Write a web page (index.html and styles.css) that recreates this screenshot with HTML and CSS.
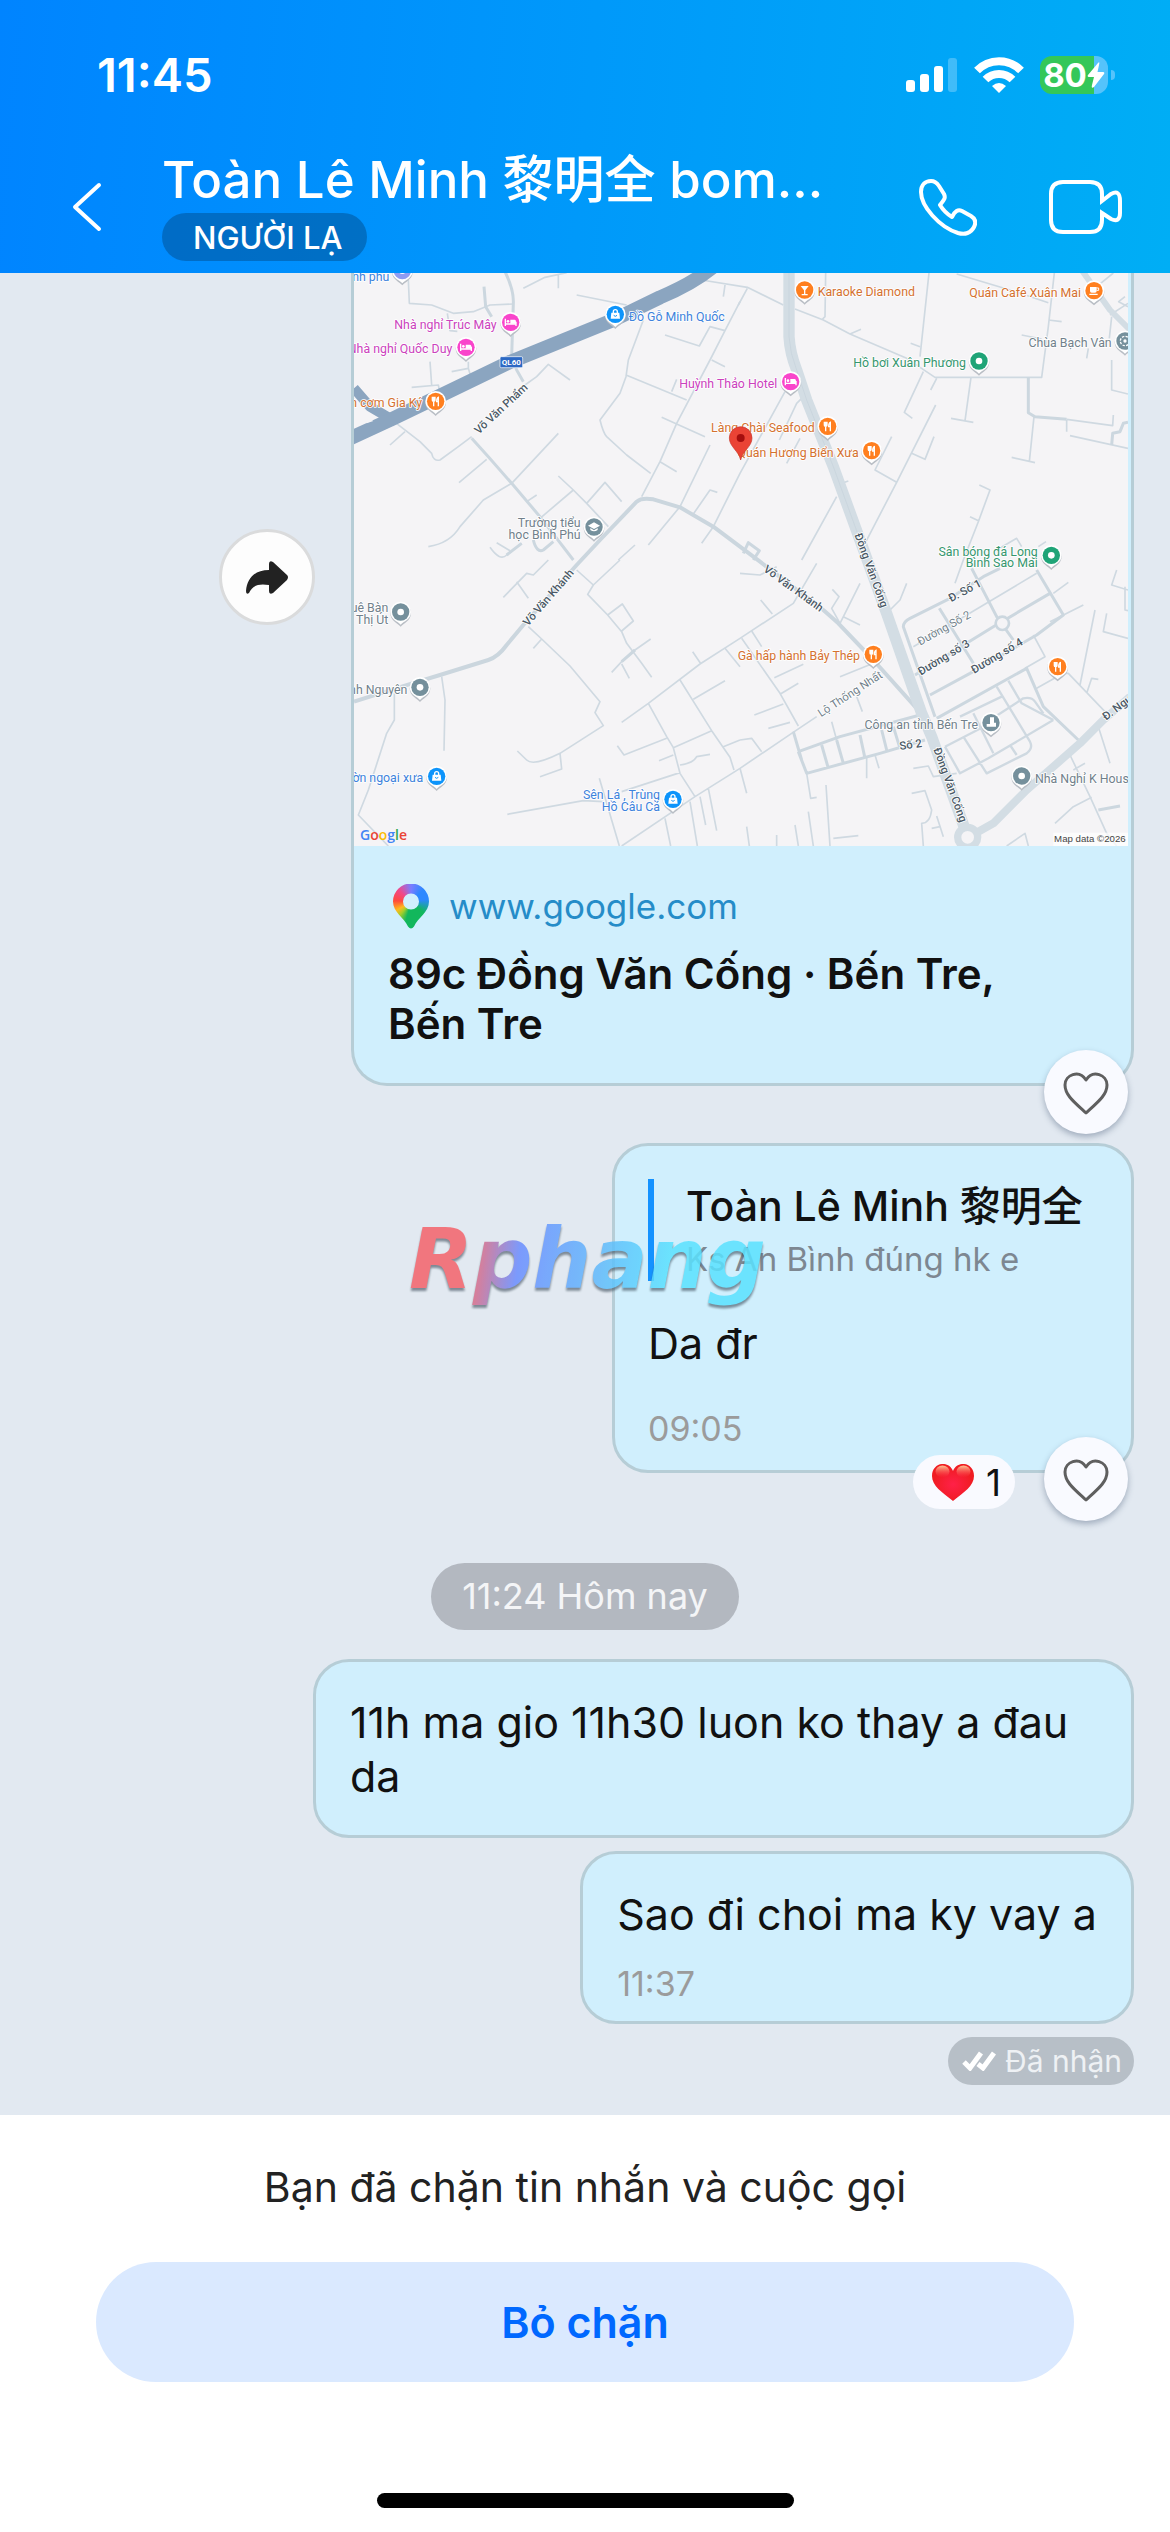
FILE: index.html
```html
<!DOCTYPE html>
<html lang="vi">
<head>
<meta charset="utf-8">
<meta name="viewport" content="width=device-width, initial-scale=1">
<title>Toàn Lê Minh 黎明全</title>
<link rel="stylesheet" href="styles.css">
</head>
<body>
<header class="topbar">
  <div class="status">
    <time class="status-time">11:45</time>
    <div class="status-icons">
      <svg width="52" height="36" viewBox="0 0 52 36" fill="#fff" aria-hidden="true"><rect y="23" width="9" height="12" rx="3"/><rect x="14" y="17" width="9" height="18" rx="3"/><rect x="28" y="9" width="9" height="26" rx="3"/><rect x="42" y="1" width="9" height="34" rx="3" opacity=".25"/></svg>
      <svg width="50" height="38" viewBox="0 0 50 38" fill="none" stroke="#fff" stroke-width="8" aria-hidden="true"><path d="M3 14.500C15 2 35 2 47 14.500"/><path d="M11.500 23.500C19 16 31 16 38.500 23.500"/><path d="M25 37L18 30Q25 24 32 30Z" fill="#fff" stroke="none"/></svg>
      <div class="battery"><span>80</span><svg width="18" height="26" viewBox="0 0 18 26" fill="#fff" aria-hidden="true"><path d="M11 1Q13-1 12 3L10.500 10H16Q18 10 17 12L7 25Q4 27 5 23L7 15H2Q0 15 1 13Z"/></svg></div>
    </div>
  </div>
  <nav class="nav">
    <button class="icon-btn back" aria-label="Quay lại"><svg width="32" height="50" viewBox="0 0 32 50" fill="none" stroke="#fff" stroke-width="4" stroke-linecap="round" stroke-linejoin="round"><path d="M28 3L4 25L28 47"/></svg></button>
    <div class="who">
      <h1>Toàn Lê Minh 黎明全 bom...</h1>
      <span class="tag">NGƯỜI LẠ</span>
    </div>
    <button class="icon-btn" aria-label="Gọi thoại"><svg width="58" height="57" viewBox="0 0 58 57" fill="none" stroke="#fff" stroke-width="4" stroke-linejoin="round"><path d="M12 2C16 2 18 4 20 7L25 15C27 19 25 21 21 26C24 31 28 35 33 38C36 32 39 30 43 32L52 37C57 40 57 44 55 48C52 54 46 56 39 54C20 48 2 27 2 13C2 6 6 2 12 2Z"/></svg></button>
    <button class="icon-btn" aria-label="Gọi video"><svg width="74" height="54" viewBox="0 0 74 54" fill="none" stroke="#fff" stroke-width="4"><path d="M53 21V14Q53 2 41 2H14Q2 2 2 14V40Q2 52 14 52H41Q53 52 53 40V33L62 39Q71 43 71 33V21Q71 9 62 14Z"/></svg></button>
  </nav>
</header>

<main class="chat">
  <div class="row">
    <button class="share" aria-label="Chuyển tiếp"><svg width="42" height="33" viewBox="0 0 42 33" fill="#222"><path d="M23 3Q23-1 27 1L41 14Q43 16 41 19L27 32Q23 34 23 30V24C12 22 6 25 3 32Q0 34 0 30C1 18 8 9 23 9Z"/></svg></button>
    <article class="bubble link-card">
      <svg class="map" viewBox="42 39 2322 1719" role="img" aria-label="Bản đồ Bến Tre">
        <defs>
          <g id="pin"><path d="M0 41C-8 31-31 24-31 0A31 31 0 1 1 31 0C31 24 8 31 0 41Z" fill="#b9bec5" transform="translate(0 3)"/><path d="M0 38C-8 28-31 23-31 0A31 31 0 1 1 31 0C31 23 8 28 0 38Z" fill="#fff"/><circle r="26" fill="currentColor"/></g>
          <g id="dot"><use href="#pin"/><circle r="10" fill="#fff"/></g>
          <g id="bed"><use href="#pin"/><path d="M-16-11V11M-16 5H16M16 11V-2" stroke="#fff" stroke-width="4" fill="none"/><circle cx="-8" cy="-3" r="4" fill="#fff"/><path d="M-1-8H12Q16-8 16-2V4H-1Z" fill="#fff"/></g>
          <g id="food"><use href="#pin"/><path d="M-10-14V-3Q-10 0-6 0Q-2 0-2-3V-14M-6-14V15M8 15V-12Q3-10 3 1H8" stroke="#fff" stroke-width="4" fill="none"/></g>
          <g id="bag"><use href="#pin"/><path d="M-12-5H12L14 13H-14Z" fill="#fff"/><path d="M-6-4V-8A6 6 0 0 1 6-8V-4" stroke="#fff" stroke-width="4" fill="none"/><path d="M-5 3Q0 9 5 3" stroke="currentColor" stroke-width="3" fill="none"/></g>
          <g id="cup"><use href="#pin"/><path d="M-12-11H8V1Q8 6 3 6H-7Q-12 6-12 1ZM-14 9H11V13H-14Z" fill="#fff"/><path d="M8-8H14V-1H8" stroke="#fff" stroke-width="3" fill="none"/></g>
          <g id="school"><use href="#pin"/><path d="M0-14L18-4L0 6L-18-4ZM-11 3V9Q0 17 11 9V3L0 10Z" fill="#fff"/></g>
        </defs>
        <rect x="42" y="39" width="2322" height="1719" fill="#f5f4f6"/>
        <g fill="none" stroke-linejoin="round">
          <path class="lane" d="M205 60L208 130L275 135L340 160L400 155L450 135L520 132M322 160L330 212L352 214M270 305L275 375M215 382L295 375L300 400M335 335L385 325L392 348M385 305V325M550 85L615 52L680 38M655 45V85M710 105L860 135M555 375L590 350L625 313L690 360M150 475L240 545L275 580Q280 605 300 600L355 560L395 530M150 555L195 515M655 520L515 670L430 720L360 800Q330 850 265 860M357 668L440 598M560 725L590 705M910 180L865 300L858 350L840 400L780 480Q790 520 800 530L860 585L932 640M858 345L1040 420M995 395L1010 358M975 225L1078 258L1110 200L1155 212M1200 125L1155 212L1110 300L1010 490L960 605L905 710M1115 300L1155 320M965 472L1095 530M960 605L1010 635M1110 555L1020 740L925 855M1060 762L1110 690L1132 697M1335 395L1200 640L1120 800L1085 850M1085 60L1222 82L1330 135M1155 75L1150 110M655 648L700 690L740 730L805 800M740 730L795 667L845 725M700 690L600 775M835 900L885 855M450 862Q480 905 500 885L545 850M470 848L510 872"/>
          <path class="lane" d="M625 900L580 945L560 940L490 1012M530 965L565 1015M710 930L760 975L840 900M760 975L743 1003L803 1065L845 1115L860 1150L905 1210L935 1252M803 1065L847 1032L880 1083L845 1113M932 1137L885 1170L845 1205L815 1237M845 1212L868 1255M565 1100L605 1137L690 1218L780 1325L765 1358L790 1397L660 1480Q580 1520 560 1500L532 1473M660 1480L665 1527L600 1550M605 1137L580 1165M845 1387L925 1330L1080 1212L1200 1135L1360 1030L1430 910M1058 1175L1083 1212M925 1330L980 1430L1000 1463L1020 1540L1065 1610M1020 1260L1115 1412L1170 1492L1182 1530M1060 1318L1155 1262M1000 1463L1115 1412M832 1457L852 1485L980 1435M957 1502L1000 1485M1020 1515Q1060 1510 1070 1490L1110 1483M1150 1460L1200 1440M845 1758L1065 1610L1200 1525L1355 1420L1430 1370M845 1595L1020 1538M502 1663L730 1622L790 1625M778 1555L838 1758M975 1675L992 1758M1050 1625L1072 1758M1080 1610L1097 1695M1105 1585L1130 1712M1155 1165L1200 1220M305 1250L315 1320L312 1472M163 1300V1380L140 1420L85 1590L55 1665L145 1758"/>
          <path class="lane" d="M1222 85L1195 135M1365 147L1450 180L1530 222L1700 295L1785 352L1905 352H2105L2125 200L2143 39M1457 39L1455 170L1445 180M1530 222L1563 208M1767 39L1740 290M1712 250L1740 260M1850 42L2010 90L2125 128M2045 225L2105 237M2125 180L2165 185M1750 335L1693 457L1717 475M1790 355L1772 390M1893 352L1875 482M1833 475L1900 487M2180 478L2318 497L2320 465M2180 480V515M2082 470L2068 605M2015 592L2085 608M2190 527L2364 565M1655 530L1605 630L1670 667M1787 435L1670 667L1575 850M1715 580L1755 598L1782 530M1318 540L1370 430L1385 415M1340 610L1380 535M1490 710L1385 900M1505 670L1525 663M1918 675L1950 690L1915 785L1870 900L1845 970M1890 770L1917 783M1970 870L2030 835L2045 860M2095 860L2118 845M2315 170L2308 235M2364 130L2310 165M2364 140L2336 125L2355 110M2315 300V390L2364 402M2245 265L2240 295M2270 80L2320 39"/>
          <path class="lane" d="M1262 1020L1297 1062M1235 1113L1265 1160M1205 1135L1320 1300L1375 1398M1320 1303L1375 1270M1243 1365L1330 1332M1285 1405L1350 1387M1500 1090L1560 970M1510 1070L1560 1095M1500 1090L1475 1045L1497 1010L1477 988M1650 1050L1680 1020L1700 970M1303 1253L1390 1213M1200 940L1260 945L1310 920M1500 1250L1600 1210M1720 1160L2090 940M2080 1125L2115 1190L2055 1225M2090 1285L2170 1240L2185 1240L2295 1355M2220 1275L2265 1050M2130 1085L2230 1035M2300 1060L2290 1115L2364 1135M2330 930L2315 975L2364 990M2355 980V1050L2364 1052M2240 1300L2255 1255L2275 1258M2140 1000L2185 967M1475 1385L1490 1440M1550 1310L1567 1355M1400 1540L1412 1615L1430 1612M1458 1575L1470 1758M1480 1735L1555 1727M1405 1655L1420 1758M1365 1695L1375 1758M1220 1700L1228 1758M1310 1725V1758M1580 1490V1555M1605 1485L1617 1525M1715 1600L1755 1592L1775 1650Q1770 1690 1745 1690L1750 1758M1790 1668L1810 1730M1775 1705L1800 1700M1720 1525L1765 1518L1780 1550L1850 1540M2190 1485L2250 1610L2300 1720L2330 1758M2275 1400L2310 1510M2145 1690L2200 1640L2255 1612M2200 1530L2235 1510M1200 1440L1235 1435L1265 1475M1200 1525L1220 1600M2000 1758L2055 1720L2065 1758"/>
          <path class="street" d="M432 80L437 140L455 170M495 35Q522 90 520 130L515 290L530 330L550 365M395 535L445 590L515 670L600 770L700 900M580 840Q590 880 610 870L640 845M500 885L545 850M1210 880L1225 848L1258 872L1240 900M845 1205L885 1170M2065 352V458L2085 470L2180 478M2315 555L2318 520L2340 515L2350 490L2364 487M2275 1650L2340 1638"/>
          <path class="street" d="M1785 1370L1690 1100Q1690 1085 1710 1075L1830 1015L1930 950L1980 925M1770 1305L1890 1240L2090 1125L2170 1065L2090 930M1725 1245L1960 1100L2130 1000M1790 1375L2060 1225L2110 1340L2215 1440M1798 1045L1900 1210M1895 925L1970 1070L2020 1140"/>
          <path class="street" d="M1375 1475L1500 1430L1740 1365M1375 1475L1400 1540L1620 1480L1755 1440M1445 1455L1465 1525M1490 1440L1510 1510M1560 1425L1575 1495M1625 1410L1640 1470M1660 1400L1680 1465M1360 1415L1385 1500"/>
          <path class="lane wide" d="M1815 1460L1960 1385M1815 1460L1860 1540L1945 1495L2140 1380M1870 1430L1940 1540L2060 1480Q2080 1465 2070 1445L1970 1280M2005 1262L2045 1330L2140 1380M1860 1370L1985 1310M1950 1380L2050 1315Q2075 1310 2085 1325L2110 1360M2010 1455L2030 1485M1900 1360L1960 1480"/>
          <path class="road" d="M42 1325L185 1280L300 1245L445 1200Q475 1190 500 1155L550 1095L710 915L780 840L890 725Q905 712 940 718L1020 742L1120 800L1200 860L1260 905L1450 1050L1495 1090L1600 1200L1730 1345"/>
          <path d="M2225 30L2310 150L2370 210" stroke="#d3dde4" stroke-width="18"/>
          <path d="M1880 1735L1960 1690L2060 1590L2220 1450L2290 1380L2370 1310" stroke="#d3dde4" stroke-width="24"/>
          <path d="M1347 30V230Q1350 280 1370 330L1400 420L1480 620L1560 840L1640 1060L1745 1360L1775 1430L1883 1730" stroke="#d3dde4" stroke-width="34"/>
          <path d="M1347 30V230Q1350 280 1370 330L1400 420L1480 620L1560 840" stroke="#c6d2db" stroke-width="2"/>
          <path d="M42 385L90 440L150 475" stroke="#8ba5c0" stroke-width="30"/>
          <path d="M30 535L150 480L290 412L512 305L820 180L960 112Q1060 70 1120 20" stroke="#8ba5c0" stroke-width="42"/>
          <path d="M78 470L100 483L80 490Z" fill="#f5f4f6"/>
          <circle cx="1883" cy="1732" r="30" stroke="#d3dde4" stroke-width="22" fill="#f5f4f6"/>
          <circle cx="1987" cy="1090" r="20" stroke="#ccd7df" stroke-width="8" fill="#f5f4f6"/>
        </g>
        <rect x="480" y="290" width="68" height="33" rx="4" fill="#2d69c4" stroke="#fff" stroke-width="2"/>
        <g class="labels">
          <text x="514" y="316" class="shield">QL60</text>
          <g class="blue"><text x="148" y="62" class="end">Bình phú</text><text x="866" y="183">Đồ Gỗ Minh Quốc</text><text x="250" y="1567" class="end">vườn ngoại xưa</text><text x="960" y="1618" class="end">Sên Lá , Trùng</text><text x="960" y="1652" class="end">Hồ Câu Cá</text></g>
          <g class="pink end"><text x="470" y="206">Nhà nghỉ Trúc Mây</text><text x="337" y="280">Nhà nghỉ Quốc Duy</text><text x="1312" y="383">Huỳnh Thảo Hotel</text></g>
          <g class="orange"><text x="246" y="441" class="end">Quán cơm Gia Ký</text><text x="1424" y="517" class="end">Làng Chài Seafood</text><text x="1556" y="590" class="end">Quán Hương Biển Xưa</text><text x="1433" y="107">Karaoke Diamond</text><text x="2223" y="110" class="end">Quán Café Xuân Mai</text><text x="1560" y="1201" class="end">Gà hấp hành Bảy Thép</text></g>
          <g class="green end"><text x="1878" y="321">Hồ bơi Xuân Phương</text><text x="2093" y="887">Sân bóng đá Long</text><text x="2093" y="921">Bình Sao Mai</text></g>
          <g class="gray"><text x="722" y="801" class="end">Trường tiểu</text><text x="722" y="837" class="end">học Bình Phú</text><text x="2315" y="261" class="end">Chùa Bạch Vân</text><text x="1914" y="1406" class="end">Công an tỉnh Bến Tre</text><text x="2085" y="1568">Nhà Nghỉ K House</text><text x="145" y="1056" class="end">Quê Bàn</text><text x="145" y="1092" class="end">Thị Út</text><text x="202" y="1302" class="end">Thanh Nguyên</text>
            <text transform="translate(1443 1372) rotate(-33)" class="small">Lộ Thống Nhất</text><text transform="translate(1740 1157) rotate(-29)" class="small">Đường Số 2</text></g>
          <g class="dark"><text transform="translate(416 524) rotate(-43)">Võ Văn Phẩm</text><text transform="translate(564 1100) rotate(-49)">Võ Văn Khánh</text><text transform="translate(1268 932) rotate(36)">Võ Văn Khánh</text><text transform="translate(1543 824) rotate(70)">Đồng Văn Cống</text><text transform="translate(1780 1468) rotate(70)">Đồng Văn Cống</text><text transform="translate(1833 1027) rotate(-28)">Đ. Số 1</text><text transform="translate(1742 1247) rotate(-31)">Đường số 3</text><text transform="translate(1902 1242) rotate(-31)">Đường số 4</text><text transform="translate(1680 1470) rotate(-8)">Số 2</text><text transform="translate(2298 1382) rotate(-37)">Đ. Nguyễn</text></g>
        </g>
        <g color="#8f9cf2"><use href="#dot" x="187" y="32"/></g>
        <g color="#f945cb"><use href="#bed" x="512" y="187"/><use href="#bed" x="378" y="262"/><use href="#bed" x="1352" y="365"/></g>
        <g color="#0d94fb"><use href="#bag" x="826" y="163"/><use href="#bag" x="290" y="1549"/><use href="#bag" x="999" y="1618"/></g>
        <g color="#ff7f1f"><use href="#food" x="287" y="424"/><use href="#food" x="1463" y="499"/><use href="#food" x="1595" y="572"/><use href="#food" x="1600" y="1183"/><use href="#food" x="2153" y="1220"/><use href="#cup" x="2262" y="92"/><use href="#pin" x="1394" y="90"/><path d="M1382 78H1406L1396 91V102H1403V106H1385V102H1392V91Z" fill="#fff"/></g>
        <g color="#1fa477"><use href="#dot" x="1917" y="303"/><use href="#dot" x="2134" y="886"/></g>
        <g color="#75909c"><use href="#school" x="762" y="801"/><use href="#dot" x="182" y="1056"/><use href="#dot" x="240" y="1282"/><use href="#dot" x="2045" y="1548"/><use href="#pin" x="2355" y="243"/><circle cx="2355" cy="243" r="14" fill="none" stroke="#fff" stroke-width="4" stroke-dasharray="7 4"/><circle cx="2355" cy="243" r="5" fill="#fff"/><use href="#pin" x="1953" y="1388"/><path d="M1950 1372H1962V1388H1968V1400H1940V1392H1950Z" fill="#fff"/></g>
        <path d="M1202 600C1196 572 1168 560 1168 534A34 34 0 0 1 1236 534C1236 560 1208 572 1202 600Z" fill="#ea4335" stroke="#c5372b" stroke-width="2"/><circle cx="1202" cy="534" r="12" fill="#a50e0e"/>
        <text x="60" y="1740" class="google"><tspan fill="#4285f4">G</tspan><tspan fill="#ea4335">o</tspan><tspan fill="#fbbc05">o</tspan><tspan fill="#4285f4">g</tspan><tspan fill="#34a853">l</tspan><tspan fill="#ea4335">e</tspan></text>
        <rect x="2140" y="1718" width="224" height="40" fill="#fff" opacity=".7"/>
        <text x="2357" y="1747" class="credit end">Map data ©2026</text>
      </svg>
      <div class="link-body">
        <a class="site" href="#map"><span class="maps-icon"></span>www.google.com</a>
        <h2>89c Đồng Văn Cống · Bến Tre, Bến Tre</h2>
      </div>
      <div class="reactions">
        <button class="heart" aria-label="Thả tim"><svg width="46" height="43" viewBox="0 0 46 43" fill="none" stroke="#5f5f5f" stroke-width="3" stroke-linejoin="round"><path d="M23 41C11 30 2 23 2 13C2 3 16-3 23 8C30-3 44 3 44 13C44 23 35 30 23 41Z"/></svg></button>
      </div>
    </article>
  </div>

  <article class="bubble reply">
    <blockquote class="quote">
      <strong>Toàn Lê Minh 黎明全</strong>
      <span>Ks An Bình đúng hk e</span>
    </blockquote>
    <p class="reply-text">Da đr</p>
    <time class="stamp">09:05</time>
    <div class="reactions">
      <span class="count"><svg width="42" height="37" viewBox="0 0 42 37" aria-hidden="true"><defs><radialGradient id="red" cx=".5" cy=".55" r=".6"><stop offset="0" stop-color="#ff2148"/><stop offset=".8" stop-color="#f01c22"/></radialGradient><linearGradient id="shine" x2="0" y2="1"><stop stop-color="#ffd9a0" stop-opacity=".9"/><stop offset="1" stop-color="#ff4a5a" stop-opacity="0"/></linearGradient></defs><path d="M21 37C10 28 0 22 0 12C0-2 17-4 21 7C25-4 42-2 42 12C42 22 32 28 21 37Z" fill="url(#red)"/><ellipse cx="10.500" cy="7.500" rx="7" ry="6" fill="url(#shine)"/><ellipse cx="31.500" cy="7.500" rx="7" ry="6" fill="url(#shine)"/></svg>1</span>
      <button class="heart" aria-label="Thả tim"><svg width="46" height="43" viewBox="0 0 46 43" fill="none" stroke="#5f5f5f" stroke-width="3" stroke-linejoin="round"><path d="M23 41C11 30 2 23 2 13C2 3 16-3 23 8C30-3 44 3 44 13C44 23 35 30 23 41Z"/></svg></button>
    </div>
    <span class="watermark">Rphang</span>
  </article>

  <time class="date">11:24 Hôm nay</time>

  <article class="bubble text-bubble"><p>11h ma gio 11h30 luon ko thay a đau da</p></article>
  <article class="bubble text-bubble last"><p>Sao đi choi ma ky vay a</p><time class="stamp">11:37</time></article>
  <span class="delivered"><svg width="34" height="20" viewBox="0 0 34 20" fill="none" stroke="#fff" stroke-width="5" aria-hidden="true"><path d="M2 11L8 17L19 2"/><path d="M16 13L21 17L32 2"/></svg>Đã nhận</span>
</main>

<footer class="blocked">
  <p>Bạn đã chặn tin nhắn và cuộc gọi</p>
  <button class="unblock">Bỏ chặn</button>
  <div class="home"></div>
</footer>
</body>
</html>
```

FILE: styles.css
```css
* { box-sizing: border-box; }
body {
  margin: 0;
  min-height: 100vh;
  display: flex;
  flex-direction: column;
  background: #fff;
  color: #111;
  font-family: Inter, "Noto Sans CJK SC", sans-serif;
}
h1, h2, p, blockquote { margin: 0; }
button { border: 0; padding: 0; font: inherit; background: none; cursor: pointer; }
svg { display: block; flex: none; }

/* header */
.topbar { background: linear-gradient(95deg, #0084ff, #00aef5); color: #fff; }
.status { display: flex; justify-content: space-between; align-items: center; height: 149px; padding: 0 55px 0 97px; }
.status-time { font-size: 47px; font-weight: 600; line-height: 54px; }
.status-icons { display: flex; align-items: center; gap: 16px; }
.battery {
  position: relative;
  display: flex;
  align-items: center;
  justify-content: center;
  width: 68px;
  height: 38px;
  margin-right: 7px;
  border-radius: 12px;
  background: linear-gradient(90deg, #34c759 54px, #55c3fb 54px);
  font-size: 33px;
  font-weight: 700;
  line-height: 38px;
}
.battery::after {
  content: "";
  position: absolute;
  right: -7px;
  top: 14px;
  width: 4px;
  height: 10px;
  border-radius: 0 5px 5px 0;
  background: #55c3fb;
}
.nav { display: flex; align-items: center; height: 124px; padding: 0 47px 8px 71px; gap: 72px; }
.nav .back { margin-right: -13px; }
.who { flex: 1; min-width: 0; align-self: flex-start; display: flex; flex-direction: column; align-items: flex-start; gap: 2px; }
h1 { font-size: 51px; font-weight: 500; line-height: 62px; white-space: nowrap; }
.tag { padding: 2px 24px 0 31px; border-radius: 24px; background: rgba(0, 70, 130, .45); font-size: 31px; font-weight: 500; line-height: 46px; }

/* conversation */
.chat { flex: 1; display: flex; flex-direction: column; align-items: flex-end; padding: 0 36px 30px; background: #e2e9f1; }
.bubble { position: relative; max-width: 821px; border: 3px solid #b6cdd6; border-radius: 36px; background: #d0effd; }
.row { display: flex; justify-content: flex-end; align-items: flex-start; gap: 36px; width: 100%; margin-bottom: 57px; }
.share { display: grid; place-items: center; width: 96px; height: 96px; margin-top: 256px; border: 3px solid #dadbdc; border-radius: 50%; background: #fdfdfd; }
.link-card { flex: 0 1 783px; border-top: 0; border-radius: 0 0 36px 36px; }
.map { width: calc(100% - 3px); height: auto; }
.link-body { padding: 37px 34px 34px; }
.site { display: flex; align-items: center; gap: 20px; padding-left: 5px; color: #258cc8; font-size: 35px; line-height: 46px; text-decoration: none; }
.maps-icon {
  width: 36px;
  height: 45px;
  background: conic-gradient(from 0deg at 18px 18px, #7a7cff 0deg, #2c88ff 45deg, #2c88ff 80deg, #12b75c 130deg, #12b75c 195deg, #a6ce2a 220deg, #ffb91f 240deg, #ff4a3d 275deg, #f0488a 315deg, #7a7cff 360deg);
  clip-path: path(evenodd, "M18 0A18 18 0 0 1 36 18C36 29 25 34 21 43Q18 47 15 43C11 34 0 29 0 18A18 18 0 0 1 18 0ZM18 10A8 8 0 0 0 18 26A8 8 0 0 0 18 10Z");
}
h2 { margin-top: 20px; font-size: 42px; font-weight: 600; line-height: 50px; max-width: 640px; }

.reactions { position: absolute; right: 3px; bottom: -51px; display: flex; align-items: center; gap: 29px; }
.heart { display: grid; place-items: center; width: 84px; height: 84px; padding-top: 2px; border-radius: 50%; background: #f9faff; box-shadow: 0 3px 6px rgba(60, 80, 110, .4); }
.count { display: flex; align-items: center; gap: 12px; height: 54px; margin-top: 6px; padding: 0 14px 0 19px; border-radius: 27px; background: #f9faff; font-size: 37px; }

.reply { width: 522px; padding: 33px 33px 21px; }
.quote { display: flex; flex-direction: column; gap: 4px; height: 102px; padding-left: 32px; border-left: 6px solid #1492ff; white-space: nowrap; }
.quote strong { font-size: 41px; font-weight: 500; line-height: 54px; }
.quote span { color: #7d8791; font-size: 33px; line-height: 44px; }
.reply-text { margin: 35px 0 39px; font-size: 43px; line-height: 54px; }
.stamp { display: block; color: #9b9b9b; font-size: 34px; line-height: 40px; }
.watermark {
  position: absolute;
  left: -212px;
  top: 64px;
  padding: 0 6px;
  background: linear-gradient(98deg, #f4636a 19%, #6a8dff 32%, #5fc0fb 56%, #5ae2ff 72%);
  -webkit-background-clip: text;
  background-clip: text;
  color: transparent;
  font: italic 700 83px/100px "DejaVu Sans", sans-serif;
  opacity: .85;
  filter: drop-shadow(0 3px 1px rgba(60, 75, 90, .7));
}

.date { align-self: center; margin: 90px 0 29px; padding: 0 31px; border-radius: 34px; background: #b3b8c0; color: #f4f5f7; font-size: 36px; line-height: 67px; }
.text-bubble { padding: 33px 34px 32px; font-size: 43px; line-height: 54px; }
.last { margin-top: 13px; padding: 33px 34px 17px; }
.last .stamp { margin-top: 23px; }
.delivered { display: flex; align-items: center; gap: 9px; margin-top: 13px; padding: 0 12px 0 14px; border-radius: 24px; background: #b7bfc7; color: #eef1f4; font-size: 30px; line-height: 48px; }

/* blocked notice */
.blocked { display: flex; flex-direction: column; align-items: center; padding: 46px 96px 24px; color: #222; }
.blocked p { font-size: 41px; line-height: 52px; }
.unblock { width: 100%; height: 120px; margin: 49px 0 111px; border-radius: 60px; background: #dae9ff; color: #0068ff; font-size: 43px; font-weight: 600; }
.home { width: 417px; height: 15px; border-radius: 8px; background: #000; }

/* map drawing */
.lane { stroke: #cfd9e1; stroke-width: 5; }
.wide { stroke-width: 7; }
.street { stroke: #ccd7df; stroke-width: 9; }
.road { stroke: #cbd6de; stroke-width: 12; }
.labels text { font-family: Roboto, sans-serif; font-size: 37px; stroke: #fff; stroke-width: 5px; paint-order: stroke; stroke-linejoin: round; }
.labels text.small { font-size: 34px; }
.labels text.shield { fill: #fff; stroke: none; font-size: 24px; font-weight: 700; text-anchor: middle; }
.end { text-anchor: end; }
.blue { fill: #3d82dc; }
.pink { fill: #cb42bd; }
.orange { fill: #d4712f; }
.green { fill: #35966e; }
.gray { fill: #717f8b; }
.dark { fill: #4b5966; }
.labels .dark text { font-size: 34px; font-weight: 500; }
.google { font-family: "Open Sans", sans-serif; font-size: 42px; font-weight: 600; }
.credit { fill: #444; font-family: "Liberation Sans", sans-serif; font-size: 29px; }
```
